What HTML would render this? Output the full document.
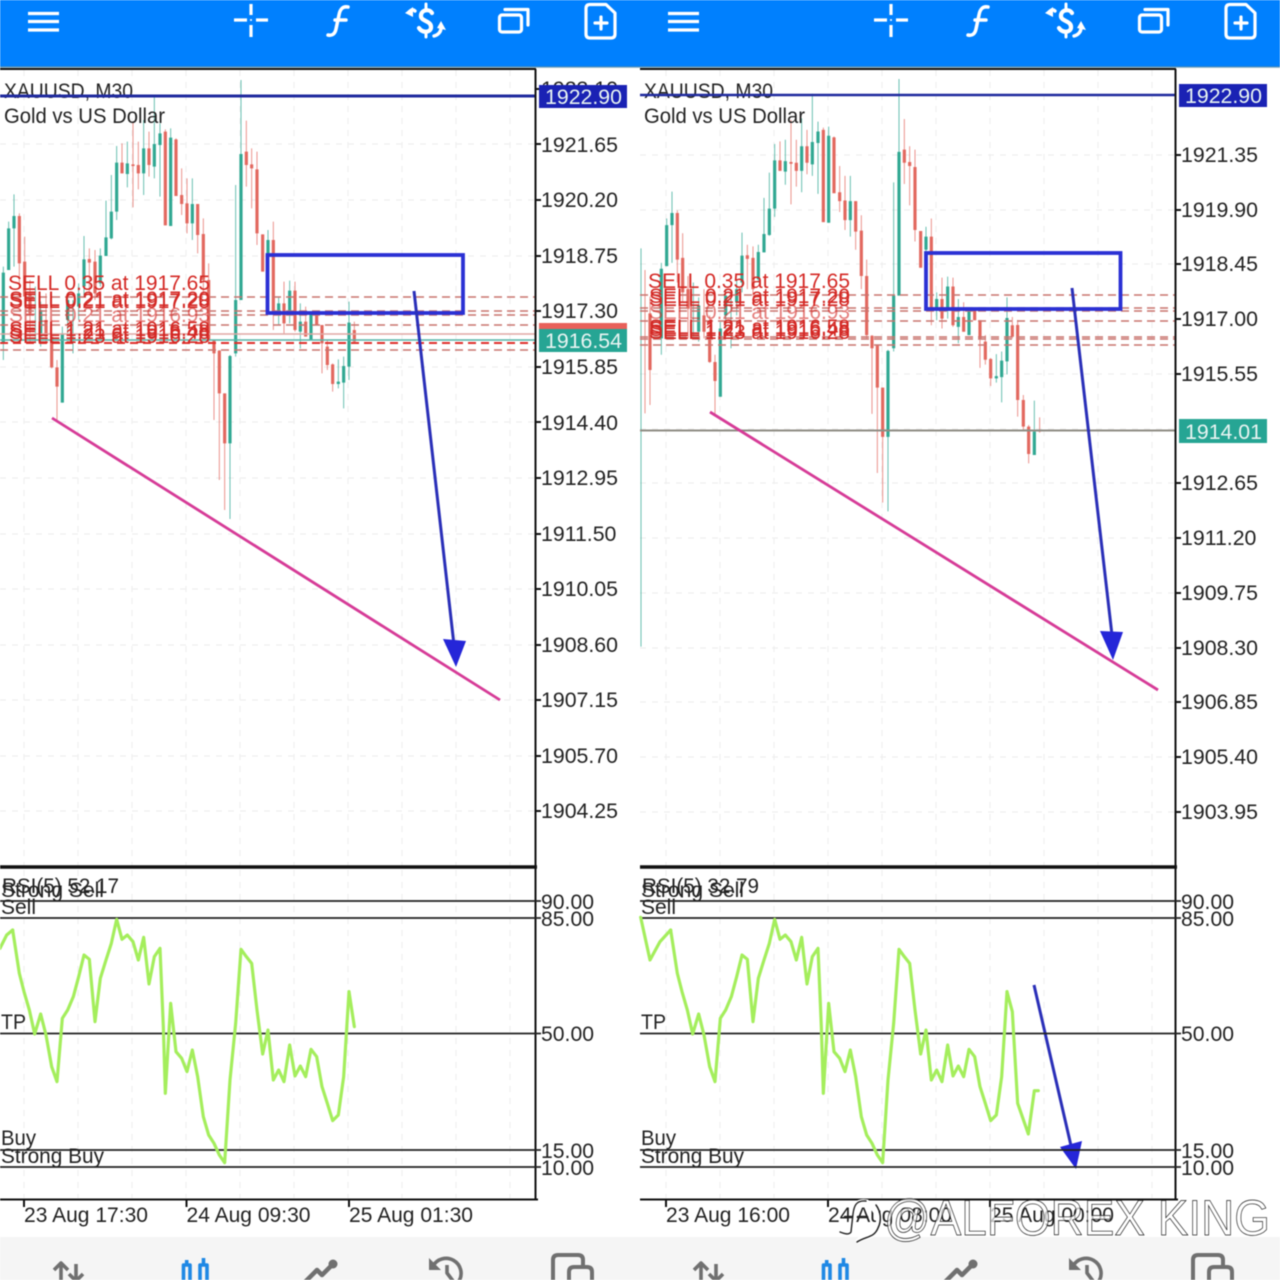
<!DOCTYPE html>
<html><head><meta charset="utf-8"><style>
html,body{margin:0;padding:0;background:#fff;width:1280px;height:1280px;overflow:hidden}
svg{display:block;filter:blur(.45px)}
text{font-family:"Liberation Sans",sans-serif;font-size:21px;fill:#222}
.p{font-size:21.3px}
.s{fill:#d42824;font-size:21px}
.w{fill:#e8f4f2;font-size:21.3px}
</style></head><body>
<svg width="1280" height="1280" viewBox="0 0 1280 1280" xmlns="http://www.w3.org/2000/svg">
<defs>
<g id="candles" fill="none">
<path stroke="#2aa690" stroke-opacity=".75" stroke-width="2.800" d="M10 560V840M26 425V570M42 343V560M106 620V790M122 665V800M187 740V968M203 640V760M219 660V820M236 610V720M252 468V650M301 505V620M318 362V528M334 285V478M350 198V420M382 185V322M431 120V345M463 45V295M480 130V350M512 145V438M577 295V480M690 825V1317M707 315V830M723 0V660M804 450V560M836 650V735M869 602V730M901 670V805M933 700V780M1015 838V925M1031 830V985M1047 665V900"/>
<path stroke="#e2645c" stroke-opacity=".75" stroke-width="2.800" d="M58 400V620M74 470V680M90 600V790M138 640V790M155 720V865M171 840V1020M268 505V640M285 510V660M366 190V280M399 125V382M415 185V328M447 155V290M496 148V436M528 175V345M545 265V405M561 295V460M593 372V520M610 415V640M626 550V790M642 780V1020M658 810V1200M674 940V1290M739 122V320M755 205V385M771 215V495M788 463V575M820 425V750M852 605V760M885 605V755M917 680V770M950 700V735M966 735V880M982 780V870M998 850V935M1063 725V790"/>
<path stroke="#30a892" stroke-width="9.500" d="M10 578V790M26 445V570M42 408V445M122 690V770M187 760V968M203 660V720M236 640V680M252 538V620M301 527V610M318 472V528M334 395V475M350 248V395M382 250V282M431 205V280M463 192V260M480 160V195M512 173V438M577 372V430M690 828V1090M707 660V820M723 222V660M804 480V520M836 670V700M869 632V700M901 725V755M933 700V780M1015 905V912M1031 858V908M1047 728V860"/>
<path stroke="#e2685f" stroke-width="9.500" d="M58 408V550M74 545V650M90 640V700M138 720V770M155 770V862M171 862V920M268 537V548M285 545V640M366 248V280M399 253V258M415 255V280M447 205V255M496 155V436M528 178V348M545 345V372M561 370V430M593 372V465M610 462V600M626 600V780M642 782V820M658 812V940M674 940V1090M739 215V255M755 253V265M771 268V460M788 463V575M820 480V700M852 670V730M885 632V750M917 725V770M950 700V735M966 735V790M982 800V855M998 853V912M1063 750V785"/>
</g>
<polyline id="rsi" fill="none" stroke="#a4ee5c" stroke-width="9.500" stroke-linejoin="round" stroke-linecap="round" points="38,210 58,340 72,395 88,450 104,522 122,462 138,525 155,620 171,665 187,475 203,450 220,410 236,350 252,285 268,298 285,485 301,355 318,300 334,250 350,178 366,238 382,225 399,245 415,300 431,232 447,372 463,290 480,265 490,500 496,700 512,430 528,575 545,595 561,635 577,570 593,650 610,770 626,825 642,850 658,885 674,908 690,660 707,490 723,268 739,290 755,310 771,450 788,582 804,510 820,660 836,630 852,665 869,555 885,648 901,618 917,650 933,568 950,590 966,680 982,730 998,782 1015,765 1031,650 1047,395"/>
<g id="topicons" fill="none" stroke="#fff" stroke-width="3.200" stroke-linecap="round" stroke-linejoin="round">
<path stroke-linecap="butt" d="M28 13.500H59M28 21.500H59M28 30H59"/>
<path stroke-linecap="butt" d="M234 20H247M256 20H268M251 4V15M251 25V37"/>
<circle cx="251" cy="20" r="1" fill="#fff" stroke="none"/>
<path stroke-width="3.500" d="M348 7C343 6 340 9 339 15L336 29C335 34 332 36 328 35M335 20H346"/>
<path stroke-width="4.200" d="M432 13C430 9 422 9 421 15C420 22 432 20 431 28C430 33 422 33 419 28"/>
<path stroke-width="3" d="M426 4V9M426 33V37"/>
<path stroke-width="3.400" d="M415 11C413 9 411 10 409 12M434 36C438 35 441 32 441 28"/>
<path fill="#fff" stroke="none" d="M405 13L413 7L413 17ZM437 28L446 30L441 21Z"/>
<rect x="499.500" y="15" width="22" height="17" rx="2.500"/>
<path d="M505 9.500H528V25"/>
<path d="M590 4.500H606L615 13V34Q615 38 611 38H590Q586 38 586 34V8.500Q586 4.500 590 4.500Z"/>
<path d="M595 23H607M601 17V29"/>
</g>
<g id="boticons" fill="none" stroke="#707070" stroke-width="3.600" stroke-linejoin="round">
<path d="M61 1282V1264M54 1270L61 1263L68 1270M76 1264V1281M69 1274L76 1281L83 1274"/>
<path stroke="#1e88e5" d="M183.500 1282V1265H190V1282M200 1282V1265H207V1282M186.700 1265V1260M203.500 1265V1258"/>
<path stroke-width="4.500" d="M305 1282L317 1270L322 1275L333 1264"/>
<circle cx="333" cy="1264" r="4.500" fill="#707070" stroke="none"/>
<path d="M433 1266A15 15 0 1 1 438 1286M447 1265V1273L453 1281"/>
<path fill="#707070" stroke="none" d="M429 1258V1270H441Z"/>
<path stroke-width="4" d="M553 1282V1260Q553 1255 558 1255H578Q583 1255 583 1260V1267M569 1282V1272Q569 1267 574 1267H587Q592 1267 592 1272V1282"/>
</g>
</defs>

<rect width="1280" height="1280" fill="#fff"/>
<rect y="1237" width="1280" height="43" fill="#f5f5f5"/>
<rect width="1280" height="67" fill="#0080fe"/>
<rect y="66" width="1280" height="2" fill="#4a7f9a" opacity=".5"/>
<use href="#topicons"/>
<use href="#topicons" x="640"/>

<g fill="none" stroke="#efefef" stroke-width="1.200" stroke-dasharray="6 6">
<path d="M24 70V866M78 70V866M132 70V866M186 70V866M240 70V866M294 70V866M348 70V866M402 70V866M456 70V866M510 70V866M24 870V1198M78 870V1198M132 870V1198M186 870V1198M240 870V1198M294 870V1198M348 870V1198M402 870V1198M456 870V1198M510 870V1198"/>
<path d="M666 70V866M720 70V866M774 70V866M828 70V866M882 70V866M936 70V866M990 70V866M1044 70V866M1098 70V866M1152 70V866M666 870V1198M720 870V1198M774 870V1198M828 870V1198M882 870V1198M936 870V1198M990 870V1198M1044 870V1198M1098 870V1198M1152 870V1198"/>
<path d="M0 144H535M0 200H535M0 256H535M0 367H535M0 422H535M0 478H535M0 534H535M0 589H535M0 645H535M0 700H535M0 756H535M0 811H535"/>
<path d="M640 155H1175M640 210H1175M640 264H1175M640 374H1175M640 429H1175M640 483H1175M640 538H1175M640 593H1175M640 648H1175M640 702H1175M640 757H1175M640 812H1175"/>
</g>

<use href="#candles" transform="translate(0,80) scale(.33333)"/>
<use href="#candles" transform="translate(658,79) scale(.33333,.3283)"/>
<g transform="translate(640,80) scale(.33333)" fill="none">
<path stroke="#2aa690" stroke-opacity=".75" stroke-width="2.800" d="M3 505V1700M1183 962V1125"/>
<path stroke="#e2645c" stroke-opacity=".75" stroke-width="2.800" d="M15 570V1000M30 650V975M1133 720V1010M1150 945V1050M1166 1035V1150M1199 1012V1058"/>
<path stroke="#e2685f" stroke-width="9.500" d="M30 700V870M1133 735V960M1150 960V1040M1166 1040V1122M1199 1050V1055"/>
<path stroke="#30a892" stroke-width="9.500" d="M1183 1055V1125"/>
</g>

<g fill="none" stroke="#c9736e" stroke-width="1.500" stroke-dasharray="8 5">
<path d="M0 297H535M0 311H535M0 315H535M0 325H535M0 350H535"/>
<path stroke="#e0302c" stroke-width="2" d="M0 343H535"/>
<path d="M640 295H1175M640 308H1175M640 311H1175M640 321H1175M640 337H1175M640 339H1175M640 345H1175"/>
</g>
<path d="M0 334H535" stroke="#e0a8a4" stroke-width="1.500"/>
<path d="M0 340H535" stroke="#55b5a8" stroke-width="1.500"/>
<path d="M640 430.500H1175" stroke="#8f8d84" stroke-width="2"/>

<text class="s" x="8" y="290" textLength="202" lengthAdjust="spacingAndGlyphs">SELL 0.35 at 1917.65</text>
<text class="s" x="9" y="306" textLength="201" lengthAdjust="spacingAndGlyphs">SELL 0.21 at 1917.20</text>
<text class="s" x="9" y="308" textLength="201" lengthAdjust="spacingAndGlyphs">SELL 0.21 at 1917.28</text>
<text class="s" x="9" y="322" textLength="201" lengthAdjust="spacingAndGlyphs" opacity=".6">SELL 0.21 at 1916.93</text>
<text class="s" x="9" y="336" textLength="201" lengthAdjust="spacingAndGlyphs">SELL 1.21 at 1916.58</text>
<text class="s" x="9" y="339" textLength="201" lengthAdjust="spacingAndGlyphs">SELL 1.21 at 1916.48</text>
<text class="s" x="9" y="343" textLength="201" lengthAdjust="spacingAndGlyphs">SELL 1.23 at 1916.28</text>
<text class="s" x="648" y="288" textLength="202" lengthAdjust="spacingAndGlyphs">SELL 0.35 at 1917.65</text>
<text class="s" x="649" y="303" textLength="201" lengthAdjust="spacingAndGlyphs">SELL 0.21 at 1917.20</text>
<text class="s" x="649" y="306" textLength="201" lengthAdjust="spacingAndGlyphs">SELL 0.21 at 1917.28</text>
<text class="s" x="649" y="319" textLength="201" lengthAdjust="spacingAndGlyphs" opacity=".6">SELL 0.21 at 1916.93</text>
<text class="s" x="649" y="334" textLength="201" lengthAdjust="spacingAndGlyphs">SELL 1.21 at 1916.58</text>
<text class="s" x="649" y="336" textLength="201" lengthAdjust="spacingAndGlyphs">SELL 1.21 at 1916.48</text>
<text class="s" x="649" y="339" textLength="201" lengthAdjust="spacingAndGlyphs">SELL 1.23 at 1916.28</text>

<text x="4" y="98" textLength="129" lengthAdjust="spacingAndGlyphs">XAUUSD, M30</text>
<text x="4" y="123" textLength="161" lengthAdjust="spacingAndGlyphs">Gold vs US Dollar</text>
<text x="644" y="98" textLength="129" lengthAdjust="spacingAndGlyphs">XAUUSD, M30</text>
<text x="644" y="123" textLength="161" lengthAdjust="spacingAndGlyphs">Gold vs US Dollar</text>
<path d="M0 96H536" stroke="#1f2a9e" stroke-width="3"/>
<path d="M640 95H1176" stroke="#1f2a9e" stroke-width="2.500"/>

<g fill="none" stroke="#2a30d4" stroke-width="3.800">
<rect x="267.500" y="255" width="195.500" height="58"/>
<rect x="926" y="253" width="194.500" height="56"/>
</g>
<g stroke="#d63b97" stroke-width="2.800">
<path d="M52 418L500 700"/>
<path d="M710 412L1158 690"/>
</g>
<g stroke="#2a2fb8" stroke-width="3">
<path d="M414 291L454 645"/>
<path d="M1072 288L1112 635"/>
<path d="M1034 985L1072 1150"/>
</g>
<g fill="#2526d8">
<path d="M443 639L466 641L456 667Z"/>
<path d="M1100 631L1123 632L1113 660Z"/>
<path d="M1060 1147L1082 1141L1076 1169Z"/>
</g>

<g fill="none" stroke="#111">
<path stroke-width="2" d="M0 69H536M640 69H1176"/>
<path stroke-width="2" d="M535.500 69V1200M1175.500 69V1200"/>
<path stroke-width="3.400" d="M0 867H537M640 867H1177"/>
<path stroke-width="2" d="M0 1199.500H538M640 1199.500H1178"/>
<path stroke-width="2" d="M536 89H541M536 144H541M536 200H541M536 256H541M536 311H541M536 367H541M536 422H541M536 478H541M536 534H541M536 589H541M536 645H541M536 700H541M536 756H541M536 811H541M24 1200V1207M186.500 1200V1207M349 1200V1207"/>
<path stroke-width="2" d="M1176 155H1181M1176 210H1181M1176 264H1181M1176 319H1181M1176 374H1181M1176 483H1181M1176 538H1181M1176 593H1181M1176 648H1181M1176 702H1181M1176 757H1181M1176 812H1181M666 1200V1207M828 1200V1207M990 1200V1207"/>
<path stroke="#222" stroke-width="1.800" d="M0 901H541M0 918H541M0 1033.500H541M0 1150H541M0 1167H541M640 901H1181M640 918H1181M640 1033.500H1181M640 1150H1181M640 1167H1181"/>
</g>

<text class="p" x="541" y="96">1923.10</text>
<text class="p" x="541" y="152">1921.65</text>
<text class="p" x="541" y="207">1920.20</text>
<text class="p" x="541" y="263">1918.75</text>
<text class="p" x="541" y="318">1917.30</text>
<text class="p" x="541" y="374">1915.85</text>
<text class="p" x="541" y="430">1914.40</text>
<text class="p" x="541" y="485">1912.95</text>
<text class="p" x="541" y="541">1911.50</text>
<text class="p" x="541" y="596">1910.05</text>
<text class="p" x="541" y="652">1908.60</text>
<text class="p" x="541" y="707">1907.15</text>
<text class="p" x="541" y="763">1905.70</text>
<text class="p" x="541" y="818">1904.25</text>
<rect x="539" y="85" width="88" height="23" fill="#1a22b4"/>
<text class="w" x="545" y="104">1922.90</text>
<rect x="539" y="323" width="88" height="7" fill="#e8605a"/>
<rect x="539" y="329" width="88" height="23" fill="#26a594"/>
<text class="w" x="545" y="348">1916.54</text>

<text class="p" x="1181" y="162">1921.35</text>
<text class="p" x="1181" y="217">1919.90</text>
<text class="p" x="1181" y="271">1918.45</text>
<text class="p" x="1181" y="326">1917.00</text>
<text class="p" x="1181" y="381">1915.55</text>
<text class="p" x="1181" y="490">1912.65</text>
<text class="p" x="1181" y="545">1911.20</text>
<text class="p" x="1181" y="600">1909.75</text>
<text class="p" x="1181" y="655">1908.30</text>
<text class="p" x="1181" y="709">1906.85</text>
<text class="p" x="1181" y="764">1905.40</text>
<text class="p" x="1181" y="819">1903.95</text>
<rect x="1179" y="84" width="88" height="23" fill="#1a22b4"/>
<text class="w" x="1185" y="103">1922.90</text>
<rect x="1179" y="419" width="88" height="24" fill="#26a594"/>
<text class="w" x="1185" y="439">1914.01</text>

<use href="#rsi" transform="translate(0,860) scale(.33333)"/>
<use href="#rsi" transform="translate(658,860) scale(.33333)"/>
<g fill="none" stroke="#a4ee5c" stroke-width="9.500" stroke-linejoin="round" stroke-linecap="round">
<polyline transform="translate(0,860) scale(.33333)" points="0,265 20,225 38,210"/>
<polyline transform="translate(0,860) scale(.33333)" points="1047,395 1063,500"/>
<polyline transform="translate(658,860) scale(.33333)" points="-52,172 -24,300 6,245 38,210"/>
<polyline transform="translate(658,860) scale(.33333)" points="1047,395 1063,455 1079,730 1111,822 1129,692 1141,692"/>
</g>
<text x="2" y="893" textLength="117" lengthAdjust="spacingAndGlyphs">RSI(5) 52.17</text>
<text x="1" y="897" textLength="103" lengthAdjust="spacingAndGlyphs">Strong Sell</text>
<text x="1" y="914" textLength="35" lengthAdjust="spacingAndGlyphs">Sell</text>
<text x="1" y="1029" textLength="25" lengthAdjust="spacingAndGlyphs">TP</text>
<text x="1" y="1145" textLength="35" lengthAdjust="spacingAndGlyphs">Buy</text>
<text x="1" y="1163" textLength="103" lengthAdjust="spacingAndGlyphs">Strong Buy</text>
<text x="642" y="893" textLength="117" lengthAdjust="spacingAndGlyphs">RSI(5) 32.79</text>
<text x="641" y="897" textLength="103" lengthAdjust="spacingAndGlyphs">Strong Sell</text>
<text x="641" y="914" textLength="35" lengthAdjust="spacingAndGlyphs">Sell</text>
<text x="641" y="1029" textLength="25" lengthAdjust="spacingAndGlyphs">TP</text>
<text x="641" y="1145" textLength="35" lengthAdjust="spacingAndGlyphs">Buy</text>
<text x="641" y="1163" textLength="103" lengthAdjust="spacingAndGlyphs">Strong Buy</text>
<text class="p" x="541" y="909" textLength="53" lengthAdjust="spacingAndGlyphs">90.00</text>
<text class="p" x="541" y="926" textLength="53" lengthAdjust="spacingAndGlyphs">85.00</text>
<text class="p" x="541" y="1041" textLength="53" lengthAdjust="spacingAndGlyphs">50.00</text>
<text class="p" x="541" y="1158" textLength="53" lengthAdjust="spacingAndGlyphs">15.00</text>
<text class="p" x="541" y="1175" textLength="53" lengthAdjust="spacingAndGlyphs">10.00</text>
<text class="p" x="1181" y="909" textLength="53" lengthAdjust="spacingAndGlyphs">90.00</text>
<text class="p" x="1181" y="926" textLength="53" lengthAdjust="spacingAndGlyphs">85.00</text>
<text class="p" x="1181" y="1041" textLength="53" lengthAdjust="spacingAndGlyphs">50.00</text>
<text class="p" x="1181" y="1158" textLength="53" lengthAdjust="spacingAndGlyphs">15.00</text>
<text class="p" x="1181" y="1175" textLength="53" lengthAdjust="spacingAndGlyphs">10.00</text>

<text x="24" y="1222" textLength="124" lengthAdjust="spacingAndGlyphs">23 Aug 17:30</text>
<text x="186.500" y="1222" textLength="124" lengthAdjust="spacingAndGlyphs">24 Aug 09:30</text>
<text x="349" y="1222" textLength="124" lengthAdjust="spacingAndGlyphs">25 Aug 01:30</text>
<text x="666" y="1222" textLength="124" lengthAdjust="spacingAndGlyphs">23 Aug 16:00</text>
<text x="828" y="1222" textLength="124" lengthAdjust="spacingAndGlyphs">24 Aug 08:00</text>
<text x="990" y="1222" textLength="124" lengthAdjust="spacingAndGlyphs">25 Aug 00:00</text>

<use href="#boticons"/>
<use href="#boticons" x="640"/>

<g fill="none" stroke-linecap="round">
<path d="M866 1203A22 22 0 0 1 876 1233C870 1238 862 1236 858 1241" stroke="#fff" stroke-width="5"/>
<path d="M876 1205A22 22 0 0 1 878 1228C874 1238 866 1236 857 1242" stroke="#222" stroke-width="1.500"/>
<path d="M867 1202C857 1200 853 1206 852 1214L850 1232C848 1234 845 1233 841 1231" stroke="#fff" stroke-width="5"/>
<path d="M866 1201C856 1200 854 1206 853 1214L851 1232C849 1235 845 1234 840 1232" stroke="#222" stroke-width="1.400"/>
<path d="M845 1217H852M858 1217H867" stroke="#222" stroke-width="2.600"/>
</g>
<text x="884" y="1235" textLength="386" lengthAdjust="spacingAndGlyphs" style="font-size:50px;fill:#fff;fill-opacity:.7;stroke:#1c1c1c;stroke-width:.7px">@ALFOREX KING</text>
</svg>
</body></html>
